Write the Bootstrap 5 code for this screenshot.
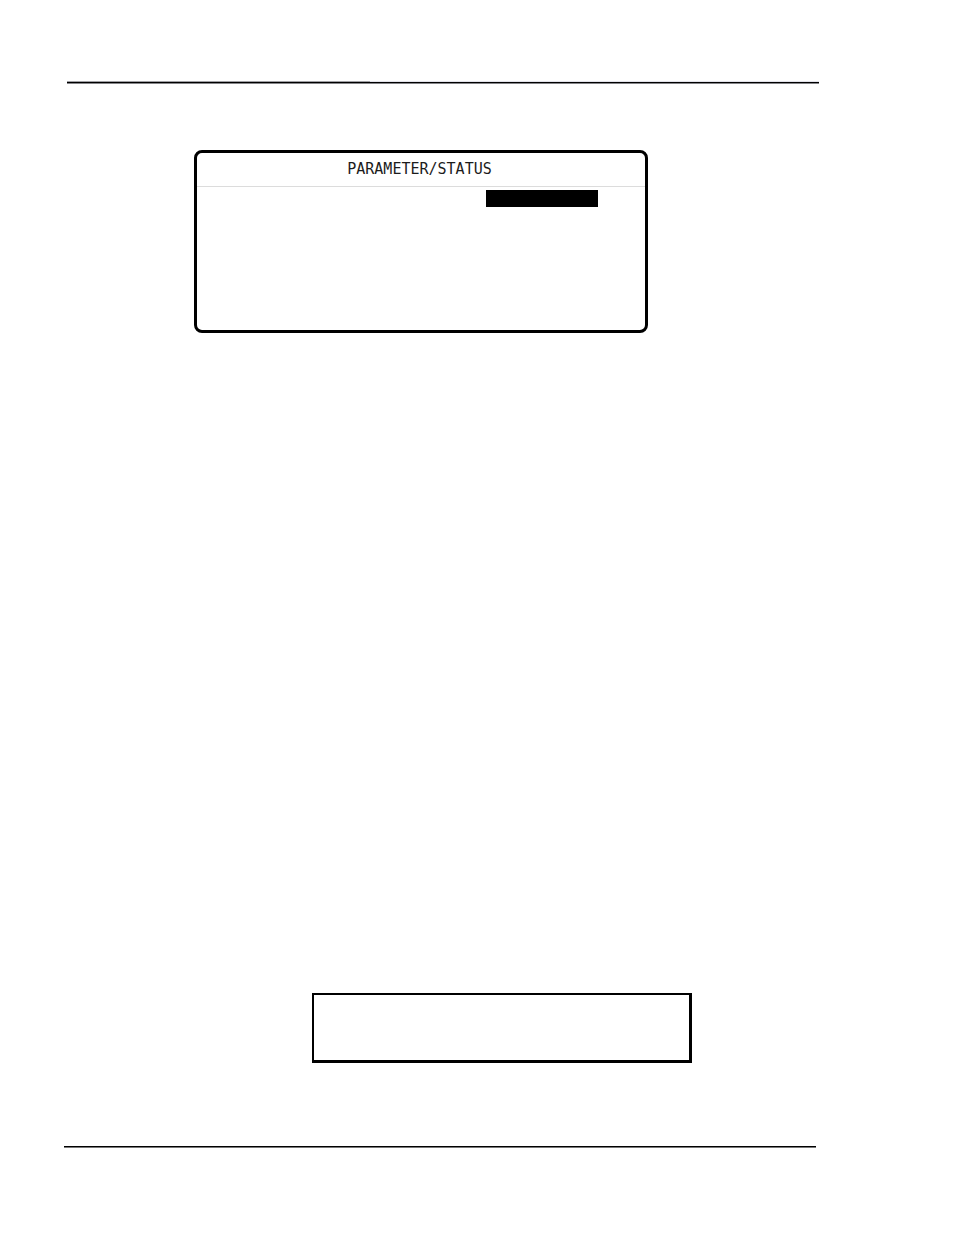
<!DOCTYPE html>
<html lang="en">
<head>
<meta charset="utf-8">
<meta name="viewport" content="width=device-width, initial-scale=1">
<title>Parameter/Status</title>
<link href="https://cdn.jsdelivr.net/npm/bootstrap@5.3.0/dist/css/bootstrap.min.css" rel="stylesheet">
<style>
  body { background: #fff; color: #000; }
  .sheet { padding: 81px 135px 87px 67px; }
  .rule { height: 3px; flex: none; }
  .rule-head { border-bottom: 1px solid #848488; }
  .rule-head > div { border-bottom: 1px solid #000; }
  .rule-start { width: 303px; border-top: 1px solid #a0a0a4; }
  .rule-end { border-top: 1px solid #e2e2ea; }
  .rule-foot { height: 2px; border-top: 1px solid #000; border-bottom: 1px solid #777; margin: 83px 3px 0 -3px; }
  .panel { width: 100%; max-width: 454px; min-height: 183px; margin: 66px 0 0 127px; border: 3px solid #000; border-radius: 8px; }
  .panel-title { font: 15px/18px "DejaVu Sans Mono", monospace; color: #1c1c1c; padding: 7px 3px 8px 0; border-bottom: 1px solid #dcdcdc; }
  .selection { width: 112px; height: 17px; background: #000; margin: 3px 47px 0 0; }
  .note { width: 100%; max-width: 380px; height: 70px; margin-left: 245px; border: solid #000; border-width: 2px 3px 3px 2px; }
</style>
</head>
<body>
<div class="sheet d-flex flex-column min-vh-100">
  <header class="rule rule-head d-flex">
    <div class="rule-start"></div>
    <div class="rule-end flex-grow-1"></div>
  </header>
  <main class="d-flex flex-column flex-grow-1">
    <section class="panel">
      <h1 class="panel-title text-center m-0">PARAMETER/STATUS</h1>
      <div class="d-flex justify-content-end"><div class="selection"></div></div>
    </section>
    <aside class="note mt-auto"></aside>
  </main>
  <footer class="rule rule-foot"></footer>
</div>
<script src="https://cdn.jsdelivr.net/npm/bootstrap@5.3.0/dist/js/bootstrap.bundle.min.js"></script>
</body>
</html>
